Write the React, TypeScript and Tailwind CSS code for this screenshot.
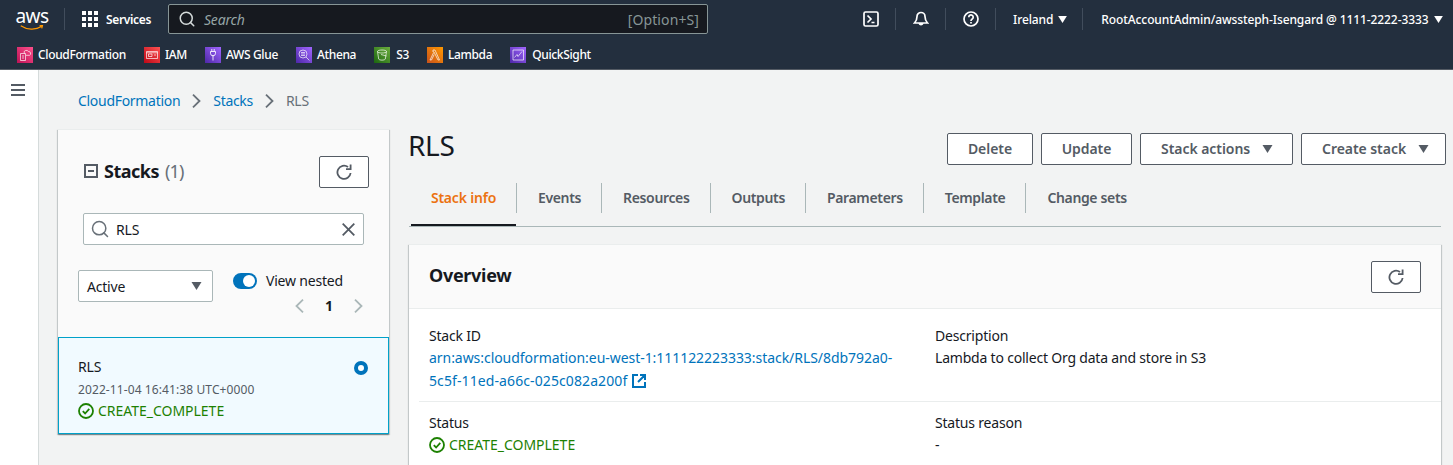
import React from 'react'
import { Search } from 'lucide-react'

const font = { fontFamily: '"Noto Sans", Arial, sans-serif' }

function Caret({ className }: { className: string }) {
  return (
    <svg viewBox="0 0 10 8" className={className} fill="currentColor">
      <path d="M0 0h10L5 8z" />
    </svg>
  )
}

function Chevron({ left, className }: { left?: boolean; className: string }) {
  return (
    <svg viewBox="0 0 9 14" className={`w-[9px] h-[14px] shrink-0 ${className}`} fill="none" stroke="currentColor" strokeWidth="1.8">
      <path d={left ? 'M8 .7L1.500 7 8 13.300' : 'M1 .7L7.500 7 1 13.300'} />
    </svg>
  )
}

function Refresh() {
  return (
    <svg viewBox="0 0 16 16" className="w-4 h-4 text-[#545b64]" fill="none" stroke="currentColor" strokeWidth="1.8">
      <path d="M14.600 9A6.600 6.600 0 1 1 12 3" />
      <path d="M14.600 .6v4.500h-4.600" />
    </svg>
  )
}

function StatusOk() {
  return (
    <div className="flex items-center gap-[4px] text-[14px] leading-[20px] tracking-[-0.02px] text-[#1d8102]">
      <svg viewBox="0 0 16 16" className="w-4 h-4" fill="none" stroke="currentColor" strokeWidth="1.8">
        <circle cx="8" cy="8" r="7" />
        <path d="M4.800 8.200l2.300 2.300 4.200-4.600" />
      </svg>
      <span>CREATE_COMPLETE</span>
    </div>
  )
}

function ServiceIcon({ from, to, children }: { from: string; to: string; children: React.ReactNode }) {
  return (
    <svg viewBox="0 0 16 16" className="w-4 h-4 shrink-0" fill="none" stroke="#fff" strokeWidth="0.8" strokeOpacity="0.85">
      <defs>
        <linearGradient id={from + to} x1="0" y1="1" x2="1" y2="0">
          <stop offset="0" stopColor={from} />
          <stop offset="1" stopColor={to} />
        </linearGradient>
      </defs>
      <rect width="16" height="16" fill={`url(#${from + to})`} stroke="none" />
      {children}
    </svg>
  )
}

const favorites = [
  {
    name: 'CloudFormation',
    from: '#bc1356',
    to: '#ff4f8b',
    gap: 'gap-[5px]',
    art: <path d="M7.500 6.500a2 2 0 0 1 1-3 2.600 2.600 0 0 1 3 1 2 2 0 0 1 1 3.800H9M3.500 6.500h5v7h-5zM5 9h2M5 11h2" />,
  },
  {
    name: 'IAM',
    from: '#bd0816',
    to: '#ff5252',
    gap: 'gap-[5px]',
    art: <path d="M2.500 4.500h11v7h-11zM4.500 7h3.500v2.500H4.500zM2.500 5.800h11M10 8h2" />,
  },
  {
    name: 'AWS Glue',
    from: '#4d27a8',
    to: '#a166ff',
    gap: 'gap-[5px]',
    art: <path d="M8 8v5.500M5.500 4.500v1.800a2.500 2.500 0 0 0 5 0V4.500zM6.800 2v2.500M9.200 2v2.500" strokeWidth="1" />,
  },
  {
    name: 'Athena',
    from: '#4d27a8',
    to: '#a166ff',
    gap: 'gap-[5px]',
    art: <path d="M7 3a4 4 0 1 1 0 8 4 4 0 0 1 0-8zM5 7h4M5 5.500h4M5 8.500h4M10 10l3.400 3.400" />,
  },
  {
    name: 'S3',
    from: '#1b660f',
    to: '#6cae3e',
    gap: 'gap-[6px]',
    art: <path d="M3.500 4.500c0-2 9-2 9 0l-1.200 7.600c-.4 1.400-6.200 1.400-6.600 0zM3.500 4.500c0 2 9 2 9 0M7 7.500l5.500 1.500" />,
  },
  {
    name: 'Lambda',
    from: '#c8511b',
    to: '#ff9900',
    gap: 'gap-[5px]',
    art: <path d="M6 3h2l4.500 10H11L7 5H6zM7.200 7.500L4.500 13H3l3.400-7" />,
  },
  {
    name: 'QuickSight',
    from: '#4d27a8',
    to: '#a166ff',
    gap: 'gap-[6px]',
    art: <path d="M3 3h10.500v10H3zM4.500 10.500l2.500-3 1 2 4-5" />,
  },
]

const tabs = ['Events', 'Resources', 'Outputs', 'Parameters', 'Template', 'Change sets']

function Divider() {
  return <div className="w-px h-[22px] bg-[#414d5c]" />
}

function HeaderIcon({ children }: { children: React.ReactNode }) {
  return (
    <svg viewBox="0 0 16 16" className="w-4 h-4 text-white" fill="none" stroke="currentColor" strokeWidth="1.7">
      {children}
    </svg>
  )
}

function Button({ label, caret, className }: { label: string; caret?: boolean; className: string }) {
  return (
    <button
      className={`h-[32px] flex items-center gap-[12px] border border-[#545b64] rounded-[2px] bg-white text-[14px] font-semibold tracking-[-0.05px] text-[#545b64] ${className}`}
    >
      <span className="pb-[2px]">{label}</span>
      {caret && <Caret className="w-[11px] h-[8px]" />}
    </button>
  )
}

function RefreshButton() {
  return (
    <button className="w-[50px] h-[32px] flex items-center justify-center border border-[#545b64] rounded-[2px] bg-white">
      <Refresh />
    </button>
  )
}

export default function App() {
  return (
    <div style={font} className="w-[1453px] h-[465px] overflow-hidden bg-[#f2f3f3] text-[#16191f] flex flex-col tracking-[-0.2px]">
      <header className="bg-[#232f3e] text-white shrink-0 border-b border-[#545b64]">
        <div className="h-[40px] flex items-center pl-[16px]">
          <div className="w-[32px] h-[24px] flex flex-col items-center mb-[2px]">
            <span className="text-[19px] leading-[18px] tracking-[-0.5px] font-normal">aws</span>
            <svg viewBox="0 0 32 8" className="w-[32px] h-[8px] text-[#ff9900]" fill="none" stroke="currentColor" strokeWidth="1.6">
              <path d="M1 1c8 5.500 20 6 27.500 1M26 1l4-.5-1 4" />
            </svg>
          </div>
          <div className="ml-[16px] mb-[2px]"><Divider /></div>
          <svg viewBox="0 0 16 16" className="w-4 h-4 ml-[17px] mb-[2px]" fill="#fff">
            <path d="M0 0h4v4H0zM6 0h4v4H6zM12 0h4v4h-4zM0 6h4v4H0zM6 6h4v4H6zM12 6h4v4h-4zM0 12h4v4H0zM6 12h4v4H6zM12 12h4v4h-4z" />
          </svg>
          <span className="ml-[8px] text-[12px] font-semibold tracking-[-0.35px] w-[62px]">Services</span>
          <div className="w-[540px] h-[30px] mb-[2px] bg-[#16191f] border border-[#879596] rounded-[2px] flex items-center pl-[9px] pr-[8px]">
            <Search size={18} className="text-[#d5dbdb]" strokeWidth={2} />
            <span className="ml-[8px] text-[14px] italic text-[#95a5a6] flex-1">Search</span>
            <span className="text-[14px] tracking-[0.1px] text-[#879596]">[Option+S]</span>
          </div>
          <div className="ml-[155px] mb-[2px] flex items-center">
            <HeaderIcon>
              <rect x="1" y="1" width="14" height="14" rx="1.500" />
              <path d="M4.500 4.500L8 8l-3.500 3.500M8.500 11.500h3" />
            </HeaderIcon>
            <div className="ml-[16px]"><Divider /></div>
            <div className="ml-[17px]">
              <HeaderIcon>
                <path d="M8 1.500a4 4 0 0 1 4 4c0 3.500 1 5 2.500 6.500h-13C3 10.500 4 9 4 5.500a4 4 0 0 1 4-4zM6.300 12.500a1.800 1.800 0 0 0 3.400 0" />
              </HeaderIcon>
            </div>
            <div className="ml-[16px]"><Divider /></div>
            <div className="ml-[17px]">
              <HeaderIcon>
                <circle cx="8" cy="8" r="7" />
                <path d="M5.800 6.200a2.200 2.200 0 1 1 3.400 1.800c-.8.500-1.200 1-1.200 1.900M8 11v1.500" />
              </HeaderIcon>
            </div>
            <div className="ml-[16px]"><Divider /></div>
            <span className="ml-[17px] mt-[2px] text-[12px] font-medium tracking-[-0.1px]">Ireland</span>
            <Caret className="w-[9px] h-[7px] ml-[5px]" />
            <div className="ml-[15px]"><Divider /></div>
            <span className="ml-[18px] mt-[2px] text-[12px] font-medium tracking-[-0.1px] whitespace-nowrap">
              RootAccountAdmin/awssteph-Isengard @ 1111-2222-3333
            </span>
            <Caret className="w-[9px] h-[7px] ml-[6px]" />
          </div>
        </div>
        <div className="h-[29px] flex items-start pl-[17px] pt-[7px] gap-[18px]">
          {favorites.map((item) => (
            <div key={item.name} className={`flex items-center text-[12px] font-medium tracking-[-0.35px] leading-[16px] ${item.gap}`}>
              <ServiceIcon from={item.from} to={item.to}>{item.art}</ServiceIcon>
              <span>{item.name}</span>
            </div>
          ))}
        </div>
      </header>

      <div className="flex flex-1 min-h-0">
        <aside className="w-[39px] shrink-0 bg-white border-r border-[#d5dbdb] pl-[11px] pt-[14px] h-full">
          <svg viewBox="0 0 14 12" className="w-[14px] h-[12px] text-[#545b64]" fill="currentColor">
            <path d="M0 0h14v2H0zM0 5h14v2H0zM0 10h14v2H0z" />
          </svg>
        </aside>

        <main className="flex-1 pl-[19px] min-w-0">
          <nav className="h-[59px] pl-[20px] pt-[21px] flex items-start gap-[12px] text-[14px] leading-[20px] tracking-[-0.3px] text-[#0073bb]">
            <span>CloudFormation</span>
            <Chevron className="text-[#687078] mt-[3px]" />
            <span>Stacks</span>
            <Chevron className="text-[#687078] mt-[3px]" />
            <span className="text-[#687078]">RLS</span>
          </nav>

          <div className="flex gap-[20px] items-start">
            <section className="w-[331px] shrink-0 bg-[#fafafa] border-t border-[#eaeded] shadow-[0_1px_1px_rgba(0,28,36,0.3),1px_1px_1px_rgba(0,28,36,0.15),-1px_1px_1px_rgba(0,28,36,0.15)]">
              <div className="h-[207px] pl-[20px] pr-[20px] pt-[26px]">
                <div className="flex items-center justify-between">
                  <div className="flex items-center pl-[6px] mb-[2px]">
                    <svg viewBox="0 0 14 14" className="w-[14px] h-[14px] text-[#545b64]" fill="none" stroke="currentColor" strokeWidth="2">
                      <rect x="1" y="1" width="12" height="12" />
                      <path d="M4 7h6" />
                    </svg>
                    <span className="ml-[6px] text-[18px] font-bold tracking-[-0.5px]">Stacks</span>
                    <span className="ml-[6px] text-[18px] tracking-[-0.8px] text-[#687078]">(1)</span>
                  </div>
                  <RefreshButton />
                </div>
                <div className="ml-[5px] mt-[25px] w-[281px] h-[32px] bg-white border border-[#aab7b8] rounded-[2px] flex items-center pl-[6px] pr-[8px]">
                  <Search size={20} className="text-[#687078]" strokeWidth={1.800} />
                  <span className="ml-[6px] text-[14px] flex-1">RLS</span>
                  <svg viewBox="0 0 13 13" className="w-[13px] h-[13px] text-[#545b64]" fill="none" stroke="currentColor" strokeWidth="1.800">
                    <path d="M.7.7l11.600 11.600M12.300.7L.7 12.300" />
                  </svg>
                </div>
                <div className="flex mt-[25px]">
                  <div className="w-[135px] h-[32px] bg-white border border-[#aab7b8] rounded-[2px] flex items-center justify-between pl-[8px] pr-[10px] text-[14px]">
                    <span>Active</span>
                    <Caret className="w-[11px] h-[8px] text-[#545b64]" />
                  </div>
                  <div className="ml-[20px] flex flex-col">
                    <div className="flex items-center mt-[1px]">
                      <div className="w-[24px] h-[16px] rounded-full bg-[#0073bb] flex items-center justify-end pr-[2px]">
                        <div className="w-[12px] h-[12px] rounded-full bg-white" />
                      </div>
                      <span className="ml-[9px] text-[14px] leading-[20px]">View nested</span>
                    </div>
                    <div className="flex items-center mt-[5px] ml-[62px]">
                      <Chevron left className="text-[#aab7b8]" />
                      <span className="ml-[21px] w-[29px] text-[14px] font-bold leading-[20px]">1</span>
                      <Chevron className="text-[#aab7b8]" />
                    </div>
                  </div>
                </div>
              </div>
              <div className="h-[97px] bg-[#f1faff] border border-[#00a1c9] pl-[19px] pr-[20px] pt-[19px] flex justify-between">
                <div>
                  <div className="text-[14px] leading-[20px]">RLS</div>
                  <div className="mt-[3px] text-[12px] leading-[20px] tracking-[0.1px] text-[#545b64]">2022-11-04 16:41:38 UTC+0000</div>
                  <div className="mt-[1px]"><StatusOk /></div>
                </div>
                <div className="w-[14px] h-[14px] mt-[4px] rounded-full border-[4px] border-[#0073bb] bg-white" />
              </div>
            </section>

            <section className="w-[1032px] shrink-0">
              <div className="h-[44px] flex items-start">
                <h1 className="text-[28px] leading-[36px] font-normal tracking-[-0.3px] flex-1 -mt-[2px] -ml-[1px]">RLS</h1>
                <div className="flex gap-[8px] mr-[-5px] mt-[4px]">
                  <Button label="Delete" className="w-[86px] justify-center" />
                  <Button label="Update" className="w-[91px] justify-center" />
                  <Button label="Stack actions" caret className="w-[153px] pl-[20px]" />
                  <Button label="Create stack" caret className="w-[145px] pl-[20px]" />
                </div>
              </div>
              <div className="h-[54px] border-b border-[#aab7b8] flex items-start pt-[10px]">
                <div className="w-[107px] h-[43px] pl-[2px]">
                  <div className="h-[43px] border-b-[2px] border-[#16191f] flex justify-center pt-[3px] text-[14px] font-semibold tracking-[-0.2px] text-[#ec7211] leading-[24px]">
                    Stack info
                  </div>
                </div>
                {tabs.map((tab) => (
                  <div
                    key={tab}
                    className="h-[30px] pl-[21px] pr-[20px] border-l border-[#aab7b8] text-[14px] font-semibold tracking-[-0.35px] text-[#545b64] leading-[30px] whitespace-nowrap last:pr-0"
                  >
                    {tab}
                  </div>
                ))}
              </div>

              <div className="mt-[17px] bg-white border-t border-[#eaeded] shadow-[0_1px_1px_rgba(0,28,36,0.3),1px_1px_1px_rgba(0,28,36,0.15),-1px_1px_1px_rgba(0,28,36,0.15)] pb-[40px]">
                <div className="h-[64px] bg-[#fafafa] border-b border-[#eaeded] flex items-center justify-between pl-[20px] pr-[20px]">
                  <h2 className="text-[18px] font-bold tracking-[-0.3px] mb-[2px]">Overview</h2>
                  <RefreshButton />
                </div>
                <div className="pl-[10px]">
                  <div className="flex h-[93px] border-b border-[#eaeded] pl-[10px] pt-[17px] text-[14px] leading-[22px]">
                    <div className="w-[506px]">
                      <div className="leading-[20px]">Stack ID</div>
                      <div className="w-[480px] leading-[23px] tracking-[-0.05px] text-[#0073bb]">
                        arn:aws:cloudformation:eu-west-1:111122223333:stack/RLS/8db792a0-
                        <br />
                        <span className="inline-flex items-center gap-[5px] tracking-[0.1px]">
                          5c5f-11ed-a66c-025c082a200f
                          <svg viewBox="0 0 14 14" className="w-[14px] h-[14px]" fill="none" stroke="currentColor" strokeWidth="2">
                            <path d="M6 1H1v12h12V8M8 1h5v5M13 1L6 8" />
                          </svg>
                        </span>
                      </div>
                    </div>
                    <div>
                      <div className="leading-[20px]">Description</div>
                      <div className="leading-[23px]">Lambda to collect Org data and store in S3</div>
                    </div>
                  </div>
                  <div className="flex pl-[10px] pt-[11px] text-[14px]">
                    <div className="w-[506px]">
                      <div className="leading-[20px]">Status</div>
                      <div className="mt-[2px]"><StatusOk /></div>
                    </div>
                    <div>
                      <div className="leading-[20px]">Status reason</div>
                      <div className="mt-[2px] leading-[20px]">-</div>
                    </div>
                  </div>
                </div>
              </div>
            </section>
          </div>
        </main>
      </div>
    </div>
  )
}
